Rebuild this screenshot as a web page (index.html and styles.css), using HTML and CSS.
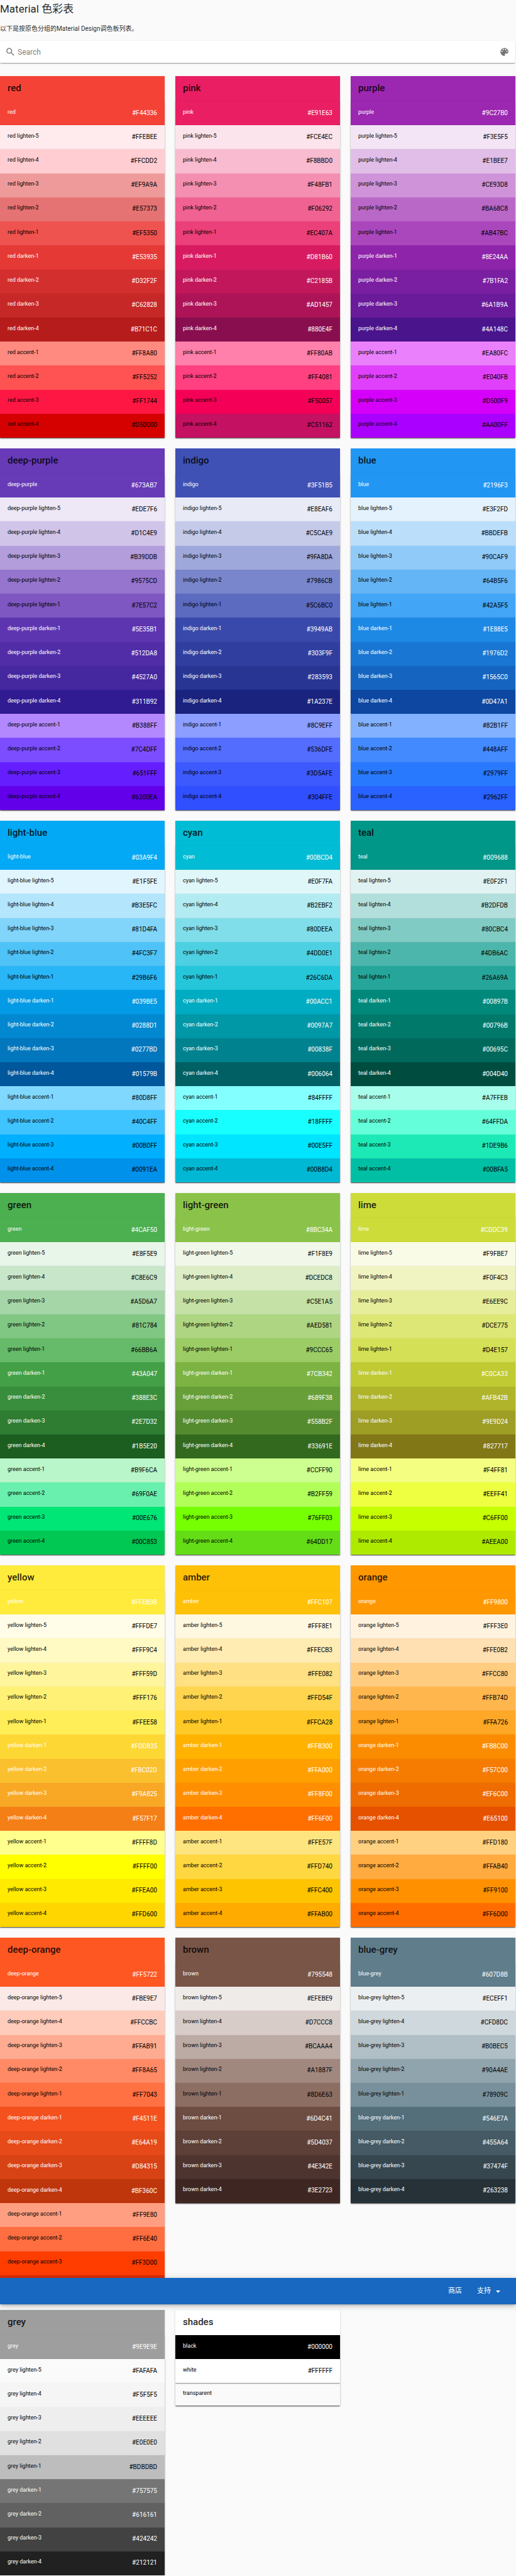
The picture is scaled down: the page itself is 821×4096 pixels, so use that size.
FILE: index.html
```html
<!DOCTYPE html>
<html lang="zh-CN">
<head>
<meta charset="utf-8">
<meta name="viewport" content="width=device-width, initial-scale=1">
<title>Material 色彩表</title>
<link rel="stylesheet" href="styles.css">
</head>
<body>
<main class="page">
  <h1 class="page-title">Material 色彩表</h1>
  <p class="page-intro">以下是按原色分组的Material Design调色板列表。</p>

  <form class="search" role="search">
    <label class="search-label" for="color-search" aria-label="Search">
      <svg class="icon" viewBox="0 0 24 24" aria-hidden="true"><path d="M9.5 3A6.5 6.5 0 0 1 16 9.5c0 1.61-.59 3.09-1.56 4.23l.27.27h.79l5 5-1.5 1.5-5-5v-.79l-.27-.27A6.516 6.516 0 0 1 9.5 16 6.5 6.5 0 0 1 3 9.5 6.5 6.5 0 0 1 9.5 3m0 2C7 5 5 7 5 9.5S7 14 9.5 14 14 12 14 9.5 12 5 9.5 5Z"/></svg>
    </label>
    <input class="search-input" id="color-search" type="text" placeholder="Search">
    <button class="icon-button" type="button" aria-label="Palette">
      <svg class="icon" viewBox="0 0 24 24" aria-hidden="true"><path d="M17.5 12a1.5 1.5 0 0 1-1.5-1.5A1.5 1.5 0 0 1 17.5 9a1.5 1.5 0 0 1 1.5 1.5 1.5 1.5 0 0 1-1.5 1.5m-3-4A1.5 1.5 0 0 1 13 6.5 1.5 1.5 0 0 1 14.5 5 1.5 1.5 0 0 1 16 6.5 1.5 1.5 0 0 1 14.5 8m-5 0A1.5 1.5 0 0 1 8 6.5 1.5 1.5 0 0 1 9.5 5 1.5 1.5 0 0 1 11 6.5 1.5 1.5 0 0 1 9.5 8m-3 4A1.5 1.5 0 0 1 5 10.5 1.5 1.5 0 0 1 6.5 9 1.5 1.5 0 0 1 8 10.5 1.5 1.5 0 0 1 6.5 12M12 3a9 9 0 0 0-9 9 9 9 0 0 0 9 9 1.5 1.5 0 0 0 1.5-1.5c0-.39-.15-.74-.39-1-.23-.27-.38-.62-.38-1a1.5 1.5 0 0 1 1.5-1.5H16a5 5 0 0 0 5-5c0-4.42-4.03-8-9-8Z"/></svg>
    </button>
  </form>

  <div class="palettes" id="palettes"></div>

  <section class="palettes-last">
    <nav class="toolbar">
      <a class="toolbar-item" href="#store">商店</a>
      <button class="toolbar-item" type="button">支持
        <svg class="icon" viewBox="0 0 24 24" aria-hidden="true"><path d="M7 10l5 5 5-5Z"/></svg>
      </button>
    </nav>
    <div class="palettes" id="neutrals"></div>
  </section>
</main>
<script src="palette.js"></script>
</body>
</html>
```

FILE: styles.css
```css
*, *::before, *::after { box-sizing: border-box; }

body {
  margin: 0;
  background: #fafafa;
  color: rgba(0, 0, 0, .87);
  font-family: Roboto, "Noto Sans CJK SC", sans-serif;
  font-size: 10px;
  line-height: 15px;
}

.page { padding-right: 1px; }

.page-title {
  margin: 0;
  padding-top: 3px;
  font-size: 17px;
  font-weight: 400;
  line-height: 23px;
}

.page-intro { margin: 12px 0; }

.icon {
  display: block;
  width: 17px;
  height: 17px;
  fill: currentColor;
}

/* Search bar */
.search {
  display: flex;
  align-items: center;
  height: 35px;
  margin-bottom: 21px;
  padding: 0 9px 0 8px;
  background: #fff;
  border-radius: 2px;
  box-shadow: 0 2px 1px -1px rgba(0, 0, 0, .2), 0 1px 1px rgba(0, 0, 0, .14), 0 1px 3px rgba(0, 0, 0, .12);
  color: rgba(0, 0, 0, .54);
}

.search-input {
  flex: 1;
  min-width: 0;
  padding: 0 3px;
  border: 0;
  outline: 0;
  background: none;
  color: rgba(0, 0, 0, .87);
  font: 12px/20px Roboto, "Noto Sans CJK SC", sans-serif;
}

.search-input::placeholder { color: rgba(0, 0, 0, .54); }

.icon-button {
  padding: 0;
  border: 0;
  background: none;
  color: inherit;
}

/* Palette cards */
.palettes {
  display: grid;
  grid-template-columns: repeat(3, minmax(0, 1fr));
  gap: 17px;
  align-items: start;
}

.palettes-last {
  position: relative;
  margin-top: 17px;
}

.card-title {
  margin: 0;
  padding: 9px 12px 11px;
  font-size: 15px;
  font-weight: 500;
  line-height: 20px;
}

.card, .swatch {
  box-shadow: 0 2px 1px -1px rgba(0, 0, 0, .2), 0 1px 1px rgba(0, 0, 0, .14), 0 1px 3px rgba(0, 0, 0, .12);
}

.swatches {
  display: grid;
  grid-auto-rows: 1fr;
  min-height: 535px;
  margin: 0;
  padding: 0;
  list-style: none;
}

.swatches-short { min-height: 382px; }

.swatches-shades {
  grid-auto-rows: auto;
  min-height: 0;
}

.swatch {
  display: flex;
  justify-content: space-between;
  align-items: center;
  min-height: 36px;
  padding: 0 12px 2px;
  color: #000;
}

.swatches-shades .swatch-coded { min-height: 38px; }

.swatch-light { color: #fff; }

.swatch-name {
  padding-bottom: 2px;
  font-size: 9px;
}

/* Toolbar over the cards */
.toolbar {
  position: absolute;
  z-index: 1;
  right: -1px;
  bottom: calc(100% + 9px);
  left: 0;
  display: flex;
  justify-content: flex-end;
  align-items: center;
  gap: 24px;
  height: 42px;
  padding: 0 20px;
  background: #1867c0;
  box-shadow: 0 2px 3px -1px rgba(0, 0, 0, .2), 0 3px 7px rgba(0, 0, 0, .14), 0 1px 13px rgba(0, 0, 0, .12);
}

.toolbar-item {
  display: flex;
  align-items: center;
  gap: 3px;
  padding: 0;
  border: 0;
  background: none;
  color: #fff;
  font: 11px/16px Roboto, "Noto Sans CJK SC", sans-serif;
  text-decoration: none;
}
```

FILE: palette.js
```js
const shadeNames = [
  '', 'lighten-5', 'lighten-4', 'lighten-3', 'lighten-2', 'lighten-1',
  'darken-1', 'darken-2', 'darken-3', 'darken-4',
  'accent-1', 'accent-2', 'accent-3', 'accent-4'
];

const colors = {
  'red': 'F44336 FFEBEE FFCDD2 EF9A9A E57373 EF5350 E53935 D32F2F C62828 B71C1C FF8A80 FF5252 FF1744 D50000',
  'pink': 'E91E63 FCE4EC F8BBD0 F48FB1 F06292 EC407A D81B60 C2185B AD1457 880E4F FF80AB FF4081 F50057 C51162',
  'purple': '9C27B0 F3E5F5 E1BEE7 CE93D8 BA68C8 AB47BC 8E24AA 7B1FA2 6A1B9A 4A148C EA80FC E040FB D500F9 AA00FF',
  'deep-purple': '673AB7 EDE7F6 D1C4E9 B39DDB 9575CD 7E57C2 5E35B1 512DA8 4527A0 311B92 B388FF 7C4DFF 651FFF 6200EA',
  'indigo': '3F51B5 E8EAF6 C5CAE9 9FA8DA 7986CB 5C6BC0 3949AB 303F9F 283593 1A237E 8C9EFF 536DFE 3D5AFE 304FFE',
  'blue': '2196F3 E3F2FD BBDEFB 90CAF9 64B5F6 42A5F5 1E88E5 1976D2 1565C0 0D47A1 82B1FF 448AFF 2979FF 2962FF',
  'light-blue': '03A9F4 E1F5FE B3E5FC 81D4FA 4FC3F7 29B6F6 039BE5 0288D1 0277BD 01579B 80D8FF 40C4FF 00B0FF 0091EA',
  'cyan': '00BCD4 E0F7FA B2EBF2 80DEEA 4DD0E1 26C6DA 00ACC1 0097A7 00838F 006064 84FFFF 18FFFF 00E5FF 00B8D4',
  'teal': '009688 E0F2F1 B2DFDB 80CBC4 4DB6AC 26A69A 00897B 00796B 00695C 004D40 A7FFEB 64FFDA 1DE9B6 00BFA5',
  'green': '4CAF50 E8F5E9 C8E6C9 A5D6A7 81C784 66BB6A 43A047 388E3C 2E7D32 1B5E20 B9F6CA 69F0AE 00E676 00C853',
  'light-green': '8BC34A F1F8E9 DCEDC8 C5E1A5 AED581 9CCC65 7CB342 689F38 558B2F 33691E CCFF90 B2FF59 76FF03 64DD17',
  'lime': 'CDDC39 F9FBE7 F0F4C3 E6EE9C DCE775 D4E157 C0CA33 AFB42B 9E9D24 827717 F4FF81 EEFF41 C6FF00 AEEA00',
  'yellow': 'FFEB3B FFFDE7 FFF9C4 FFF59D FFF176 FFEE58 FDD835 FBC02D F9A825 F57F17 FFFF8D FFFF00 FFEA00 FFD600',
  'amber': 'FFC107 FFF8E1 FFECB3 FFE082 FFD54F FFCA28 FFB300 FFA000 FF8F00 FF6F00 FFE57F FFD740 FFC400 FFAB00',
  'orange': 'FF9800 FFF3E0 FFE0B2 FFCC80 FFB74D FFA726 FB8C00 F57C00 EF6C00 E65100 FFD180 FFAB40 FF9100 FF6D00',
  'deep-orange': 'FF5722 FBE9E7 FFCCBC FFAB91 FF8A65 FF7043 F4511E E64A19 D84315 BF360C FF9E80 FF6E40 FF3D00 DD2C00',
  'brown': '795548 EFEBE9 D7CCC8 BCAAA4 A1887F 8D6E63 6D4C41 5D4037 4E342E 3E2723',
  'blue-grey': '607D8B ECEFF1 CFD8DC B0BEC5 90A4AE 78909C 546E7A 455A64 37474F 263238'
};

const neutrals = {
  'grey': '9E9E9E FAFAFA F5F5F5 EEEEEE E0E0E0 BDBDBD 757575 616161 424242 212121'
};

function swatch(name, hex, light) {
  const classes = ['swatch'];
  if (hex) classes.push('swatch-coded');
  if (light) classes.push('swatch-light');
  const background = hex ? '#' + hex : 'transparent';
  const code = hex ? `<span class="swatch-code">#${hex}</span>` : '';
  return `<li class="${classes.join(' ')}" style="background:${background}">
    <span class="swatch-name">${name}</span>${code}</li>`;
}

function card(name, background, listClass, rows) {
  return `<article class="card">
    <h2 class="card-title" style="background:${background}">${name}</h2>
    <ul class="swatches ${listClass}">${rows}</ul></article>`;
}

function colorCard([name, list]) {
  const codes = list.split(' ');
  const rows = codes.map((hex, i) => {
    const shade = shadeNames[i];
    const light = shade === '' || shade.startsWith('darken');
    return swatch(`${name} ${shade}`.trim(), hex, light);
  }).join('');
  return card(name, '#' + codes[0], codes.length < 14 ? 'swatches-short' : '', rows);
}

const shades = card('shades', '#fff', 'swatches-shades',
  swatch('black', '000000', true) + swatch('white', 'FFFFFF', false) + swatch('transparent', '', false));

document.getElementById('palettes').innerHTML = Object.entries(colors).map(colorCard).join('');
document.getElementById('neutrals').innerHTML = Object.entries(neutrals).map(colorCard).join('') + shades;
```
